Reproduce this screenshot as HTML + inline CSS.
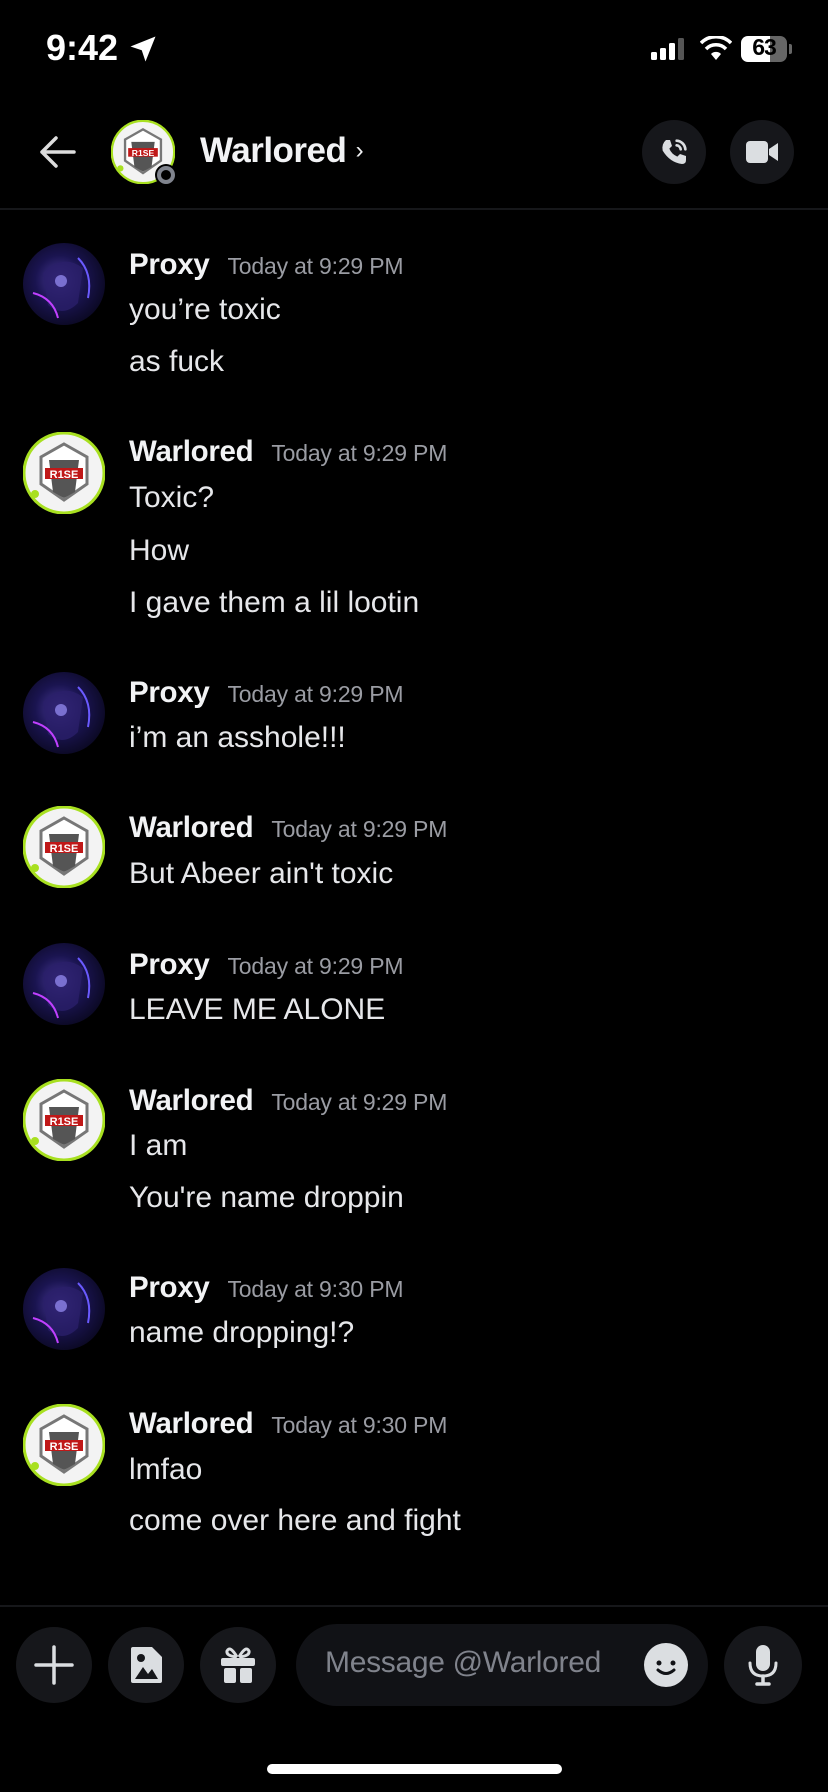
<!DOCTYPE html>
<html><head><meta charset="utf-8"><style>
*{margin:0;padding:0;box-sizing:border-box}
body{width:828px;height:1792px;background:#000;color:#fff;font-family:"Liberation Sans",sans-serif;position:relative;overflow:hidden}
.abs{position:absolute}
.name{position:absolute;left:129px;font-size:29.5px;font-weight:bold;color:#f2f3f5;letter-spacing:-0.3px;margin-top:-1px}
.ts{font-size:23px;font-weight:normal;color:#9a9ca3;margin-left:18px;letter-spacing:-0.2px}
.msg{position:absolute;left:129px;font-size:30px;color:#e6e7ea;margin-top:-2px}
.av{position:absolute;left:23px;width:82px;height:82px}
.btn{position:absolute;border-radius:50%;background:#16171b}
</style></head><body>
<svg width="0" height="0" style="position:absolute"><defs>
<radialGradient id="pg" cx="45%" cy="45%" r="60%"><stop offset="0" stop-color="#4a3a9a"/><stop offset=".5" stop-color="#1a1450"/><stop offset="1" stop-color="#0a0820"/></radialGradient>
<symbol id="proxy" viewBox="0 0 82 82"><circle cx="41" cy="41" r="41" fill="url(#pg)"/><path d="M20 30 Q40 10 60 25 L55 60 Q40 75 25 62 Z" fill="#2a1f6a" opacity=".8"/><path d="M10 50 Q30 55 35 75" stroke="#c040ff" stroke-width="2" fill="none"/><path d="M55 15 Q70 30 65 55" stroke="#6a5aff" stroke-width="2" fill="none"/><circle cx="38" cy="38" r="6" fill="#7a70d0"/></symbol>
<symbol id="war" viewBox="0 0 82 82"><circle cx="41" cy="41" r="40" fill="#f3f3f3" stroke="#a8e020" stroke-width="3"/><path d="M41 12 L64 25 L64 52 L41 68 L18 52 L18 25 Z" fill="#fff" stroke="#777" stroke-width="3"/><path d="M26 28 L56 28 L52 60 L41 66 L30 60 Z" fill="#555"/><rect x="22" y="36" width="38" height="11" fill="#c01818"/><text x="41" y="46" font-size="11" font-weight="bold" text-anchor="middle" fill="#fff" font-family="Liberation Sans">R1SE</text><circle cx="12" cy="62" r="4" fill="#a8e020"/></symbol>
</defs></svg>

<!-- status bar -->
<div class="abs" style="left:46px;top:27px;font-size:36px;font-weight:bold">9:42</div>
<svg class="abs" style="left:128px;top:34px" width="30" height="30" viewBox="0 0 24 24"><path d="M22 2 L2 10 L11 13 L14 22 Z" fill="#fff"/></svg>
<svg class="abs" style="left:651px;top:38px" width="40" height="22"><rect x="0" y="14" width="6" height="8" rx="1.5" fill="#fff"/><rect x="9" y="10" width="6" height="12" rx="1.5" fill="#fff"/><rect x="18" y="5" width="6" height="17" rx="1.5" fill="#fff"/><rect x="27" y="0" width="6" height="22" rx="1.5" fill="#555"/></svg>
<svg class="abs" style="left:700px;top:36px" width="32" height="26" viewBox="0 0 32 26"><path d="M16 24 L11 18 A7 7 0 0 1 21 18 Z" fill="#fff"/><path d="M6 13 A14 14 0 0 1 26 13" stroke="#fff" stroke-width="3.5" fill="none"/><path d="M1 7 A21 21 0 0 1 31 7" stroke="#fff" stroke-width="3.5" fill="none"/></svg>
<div class="abs" style="left:741px;top:36px;width:46px;height:26px;border-radius:7px;background:linear-gradient(90deg,#fff 63%,#666 63%)"></div>
<div class="abs" style="left:741px;top:34px;width:46px;font-size:23px;font-weight:bold;color:#000;text-align:center;letter-spacing:-1px">63</div>
<div class="abs" style="left:789px;top:44px;width:3px;height:10px;background:#666;border-radius:0 2px 2px 0"></div>

<!-- header -->
<svg class="abs" style="left:38px;top:134px" width="38" height="36" viewBox="0 0 38 36"><path d="M36 18 H4 M18 4 L4 18 L18 32" stroke="#ddd" stroke-width="3.5" fill="none" stroke-linecap="round" stroke-linejoin="round"/></svg>
<svg class="abs" style="left:111px;top:120px" width="66" height="66"><use href="#war" width="64" height="64"/><circle cx="55" cy="55" r="11" fill="#000"/><circle cx="55" cy="55" r="7" fill="none" stroke="#80848e" stroke-width="4"/></svg>
<div class="abs" style="left:200px;top:131px;font-size:35px;font-weight:bold;color:#f2f3f5;letter-spacing:-0.5px">Warlored <span style="font-size:24px;font-weight:normal;vertical-align:4px">›</span></div>
<div class="btn" style="left:642px;top:120px;width:64px;height:64px"></div>
<svg class="abs" style="left:658px;top:136px" width="32" height="32" viewBox="0 0 24 24"><path d="M6 3 L9 3 L10.5 7.5 L8.5 9.5 Q10 13.5 14.5 15.5 L16.5 13.5 L21 15 L21 18 Q21 21 18 21 Q9 20 3.5 11 Q2.5 6 6 3 Z" fill="#dbdee1"/><path d="M14 3.5 A7 7 0 0 1 20.5 10 M14 7 A3.5 3.5 0 0 1 17 10" stroke="#dbdee1" stroke-width="2" fill="none" stroke-linecap="round"/></svg>
<div class="btn" style="left:730px;top:120px;width:64px;height:64px"></div>
<svg class="abs" style="left:745px;top:137px" width="34" height="30" viewBox="0 0 34 30"><rect x="1" y="4" width="22" height="22" rx="4" fill="#dbdee1"/><path d="M24 12 L33 6 L33 24 L24 18 Z" fill="#dbdee1"/></svg>
<div class="abs" style="left:0;top:208px;width:828px;height:2px;background:#16171a"></div>

<!-- messages -->
<svg class="av" style="top:243px"><use href="#proxy" width="82" height="82"/></svg>
<div class="name" style="top:249px">Proxy<span class="ts">Today at 9:29 PM</span></div>
<div class="msg" style="top:295px">you’re toxic</div>
<div class="msg" style="top:347px">as fuck</div>

<svg class="av" style="top:432px"><use href="#war" width="82" height="82"/></svg>
<div class="name" style="top:436px">Warlored<span class="ts">Today at 9:29 PM</span></div>
<div class="msg" style="top:483px">Toxic?</div>
<div class="msg" style="top:536px">How</div>
<div class="msg" style="top:588px">I gave them a lil lootin</div>

<svg class="av" style="top:672px"><use href="#proxy" width="82" height="82"/></svg>
<div class="name" style="top:677px">Proxy<span class="ts">Today at 9:29 PM</span></div>
<div class="msg" style="top:723px">i’m an asshole!!!</div>

<svg class="av" style="top:806px"><use href="#war" width="82" height="82"/></svg>
<div class="name" style="top:812px">Warlored<span class="ts">Today at 9:29 PM</span></div>
<div class="msg" style="top:859px">But Abeer ain't toxic</div>

<svg class="av" style="top:943px"><use href="#proxy" width="82" height="82"/></svg>
<div class="name" style="top:949px">Proxy<span class="ts">Today at 9:29 PM</span></div>
<div class="msg" style="top:995px">LEAVE ME ALONE</div>

<svg class="av" style="top:1079px"><use href="#war" width="82" height="82"/></svg>
<div class="name" style="top:1085px">Warlored<span class="ts">Today at 9:29 PM</span></div>
<div class="msg" style="top:1131px">I am</div>
<div class="msg" style="top:1183px">You're name droppin</div>

<svg class="av" style="top:1268px"><use href="#proxy" width="82" height="82"/></svg>
<div class="name" style="top:1272px">Proxy<span class="ts">Today at 9:30 PM</span></div>
<div class="msg" style="top:1318px">name dropping!?</div>

<svg class="av" style="top:1404px"><use href="#war" width="82" height="82"/></svg>
<div class="name" style="top:1408px">Warlored<span class="ts">Today at 9:30 PM</span></div>
<div class="msg" style="top:1455px">lmfao</div>
<div class="msg" style="top:1506px">come over here and fight</div>

<!-- bottom -->
<div class="abs" style="left:0;top:1605px;width:828px;height:2px;background:#16171a"></div>
<div class="btn" style="left:16px;top:1627px;width:76px;height:76px"></div>
<svg class="abs" style="left:34px;top:1645px" width="40" height="40"><path d="M20 2 V38 M2 20 H38" stroke="#dbdee1" stroke-width="3.5" stroke-linecap="round"/></svg>
<div class="btn" style="left:108px;top:1627px;width:76px;height:76px"></div>
<svg class="abs" style="left:126px;top:1645px" width="40" height="40" viewBox="0 0 40 40"><path d="M5 4 Q5 2 7 2 H26 L36 12 V36 Q36 38 34 38 H7 Q5 38 5 36 Z" fill="#dbdee1"/><path d="M9 34 L17 22 L22 29 L26 24 L32 34 Z" fill="#16171b"/><circle cx="15" cy="13" r="4" fill="#16171b"/></svg>
<div class="btn" style="left:200px;top:1627px;width:76px;height:76px"></div>
<svg class="abs" style="left:218px;top:1645px" width="40" height="40" viewBox="0 0 40 40"><rect x="3" y="13" width="34" height="8" rx="2" fill="#dbdee1"/><rect x="6" y="23" width="12" height="15" rx="2" fill="#dbdee1"/><rect x="22" y="23" width="12" height="15" rx="2" fill="#dbdee1"/><path d="M19 12 Q12 0 9 6 Q8 11 19 12 M21 12 Q28 0 31 6 Q32 11 21 12" stroke="#dbdee1" stroke-width="3" fill="none"/></svg>
<div class="abs" style="left:296px;top:1624px;width:412px;height:82px;border-radius:41px;background:#111216"></div>
<div class="abs" style="left:325px;top:1646px;font-size:30px;color:#80838c;letter-spacing:-0.3px">Message @Warlored</div>
<svg class="abs" style="left:644px;top:1643px" width="44" height="44" viewBox="0 0 44 44"><circle cx="22" cy="22" r="22" fill="#dbdee1"/><circle cx="15" cy="20" r="2.5" fill="#111216"/><circle cx="29" cy="20" r="2.5" fill="#111216"/><path d="M14 27 Q22 34 30 27" stroke="#111216" stroke-width="3" fill="none" stroke-linecap="round"/></svg>
<div class="btn" style="left:724px;top:1626px;width:78px;height:78px"></div>
<svg class="abs" style="left:744px;top:1643px" width="38" height="44" viewBox="0 0 38 44"><rect x="12" y="2" width="14" height="26" rx="7" fill="#dbdee1"/><path d="M6 20 Q6 33 19 33 Q32 33 32 20" stroke="#dbdee1" stroke-width="3" fill="none" stroke-linecap="round"/><path d="M19 33 V41 M13 41 H25" stroke="#dbdee1" stroke-width="3.5" stroke-linecap="round"/></svg>
<div class="abs" style="left:267px;top:1764px;width:295px;height:10px;border-radius:5px;background:#fff"></div>
</body></html>
